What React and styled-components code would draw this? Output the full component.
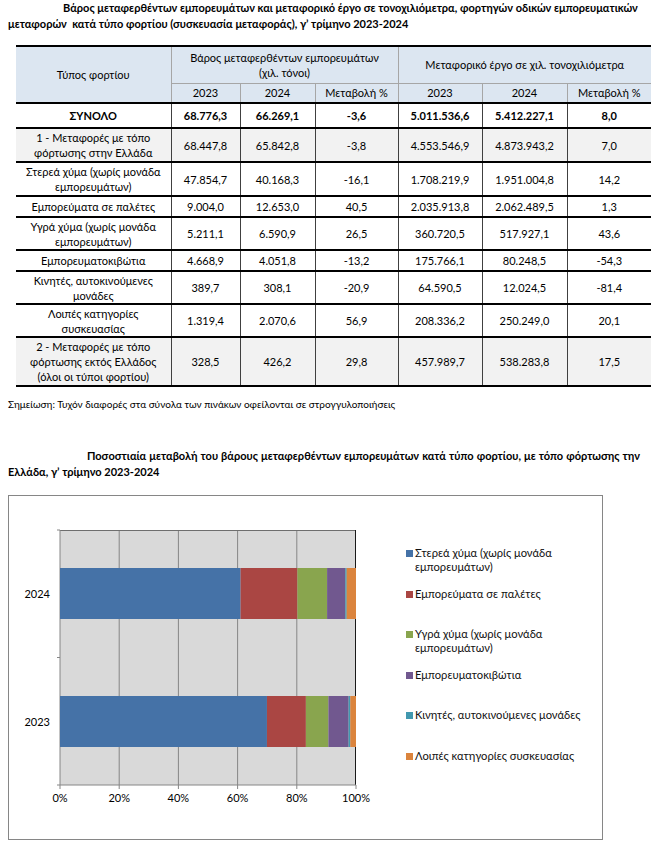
import React from 'react';
import styled, { createGlobalStyle } from 'styled-components';

const GlobalStyle = createGlobalStyle`
  body {
    margin: 0;
    background: #fff;
    color: #000;
    font-family: Lato, "Liberation Sans", sans-serif;
  }
`;

const Page = styled.div`
  width: 654px;
  padding: 0 0 0 8px;
  box-sizing: border-box;
`;

const Title = styled.div`
  width: 632px;
  font-size: 11px;
  font-weight: 700;
  line-height: 16px;
`;

const TitleLine = styled.div`
  padding-left: ${p => p.$indent || 0}px;
  text-align: ${p => (p.$justify ? 'justify' : 'left')};
  text-align-last: ${p => (p.$justify ? 'justify' : 'auto')};
`;

const Table = styled.table`
  margin: 13px 0 0 8px;
  width: 635px;
  table-layout: fixed;
  border-collapse: collapse;
  font-size: 11px;
  line-height: 15px;
`;

const HeadCell = styled.th`
  padding: 0;
  font-weight: 400;
  text-align: center;
  background: #dce6f1;
  border-top: ${p => (p.$top ? '2px solid #000' : '1px solid #a6a6a6')};
  border-left: ${p => (p.$first ? 'none' : '1px solid #a6a6a6')};
`;

const Row = styled.tr`
  height: ${p => p.$h}px;
  background: ${p => (p.$shade ? '#f2f2f2' : '#fff')};
`;

const Cell = styled.td`
  padding: 0;
  text-align: center;
  font-weight: ${p => (p.$bold ? 700 : 400)};
  border-top: 2px solid #000;
  border-bottom: 2px solid #000;
  border-left: ${p => (p.$first ? 'none' : '1px solid #404040')};
`;

const Note = styled.div`
  margin-top: 9px;
  font-size: 10px;
  line-height: 16px;
`;

const ChartTitle = styled(Title)`
  margin-top: 36px;
`;

const ChartBox = styled.div`
  margin-top: 15px;
  width: 595px;
  height: 345px;
  border: 1px solid #868686;
  box-sizing: border-box;
  display: flex;
`;

const Legend = styled.ul`
  list-style: none;
  margin: 50px 0 0 27px;
  padding: 0;
  font-size: 11.2px;
  line-height: 14px;
  color: #111;
`;

const LegendItem = styled.li`
  display: flex;
  gap: 2px;
  height: 40.6px;
`;

const Swatch = styled.span`
  flex: none;
  width: 7px;
  height: 7px;
  margin-top: 4px;
  background: ${p => p.$color};
`;

const columns = [155, 69, 75, 83, 84, 85, 84];

const rows = [
  { name: ['ΣΥΝΟΛΟ'], v: ['68.776,3', '66.269,1', '-3,6', '5.011.536,6', '5.412.227,1', '8,0'], bold: true, h: 25 },
  { name: ['1 - Μεταφορές με τόπο', 'φόρτωσης στην Ελλάδα'], v: ['68.447,8', '65.842,8', '-3,8', '4.553.546,9', '4.873.943,2', '7,0'], shade: true, h: 34 },
  { name: ['Στερεά χύμα (χωρίς μονάδα', 'εμπορευμάτων)'], v: ['47.854,7', '40.168,3', '-16,1', '1.708.219,9', '1.951.004,8', '14,2'], h: 34 },
  { name: ['Εμπορεύματα σε παλέτες'], v: ['9.004,0', '12.653,0', '40,5', '2.035.913,8', '2.062.489,5', '1,3'], h: 21 },
  { name: ['Υγρά χύμα (χωρίς μονάδα', 'εμπορευμάτων)'], v: ['5.211,1', '6.590,9', '26,5', '360.720,5', '517.927,1', '43,6'], h: 33 },
  { name: ['Εμπορευματοκιβώτια'], v: ['4.668,9', '4.051,8', '-13,2', '175.766,1', '80.248,5', '-54,3'], h: 21 },
  { name: ['Κινητές, αυτοκινούμενες', 'μονάδες'], v: ['389,7', '308,1', '-20,9', '64.590,5', '12.024,5', '-81,4'], h: 33 },
  { name: ['Λοιπές κατηγορίες', 'συσκευασίας'], v: ['1.319,4', '2.070,6', '56,9', '208.336,2', '250.249,0', '20,1'], h: 33 },
  { name: ['2 - Μεταφορές με τόπο', 'φόρτωσης εκτός Ελλάδος', '(όλοι οι τύποι φορτίου)'], v: ['328,5', '426,2', '29,8', '457.989,7', '538.283,8', '17,5'], shade: true, h: 49 },
];

const series = [
  { label: ['Στερεά χύμα (χωρίς μονάδα', 'εμπορευμάτων)'], color: '#4572a7', y2023: 47854.7, y2024: 40168.3 },
  { label: ['Εμπορεύματα σε παλέτες'], color: '#aa4643', y2023: 9004.0, y2024: 12653.0 },
  { label: ['Υγρά χύμα (χωρίς μονάδα', 'εμπορευμάτων)'], color: '#89a54e', y2023: 5211.1, y2024: 6590.9 },
  { label: ['Εμπορευματοκιβώτια'], color: '#71588f', y2023: 4668.9, y2024: 4051.8 },
  { label: ['Κινητές, αυτοκινούμενες μονάδες'], color: '#4198af', y2023: 389.7, y2024: 308.1 },
  { label: ['Λοιπές κατηγορίες συσκευασίας'], color: '#db843d', y2023: 1319.4, y2024: 2070.6 },
];

const PLOT = { x: 51, y: 34, w: 296, h: 255 };

const Bar = ({ year, y }) => {
  const key = 'y' + year;
  const total = series.reduce((s, d) => s + d[key], 0);
  let acc = 0;
  return (
    <g>
      {series.map(d => {
        const x = PLOT.x + (acc / total) * PLOT.w;
        acc += d[key];
        const x2 = PLOT.x + (acc / total) * PLOT.w;
        return <rect key={d.color} x={x} y={y} width={x2 - x} height={51} fill={d.color} />;
      })}
      <text x={41} y={y + 30} textAnchor="end" fontSize="11" fill="#000">{year}</text>
    </g>
  );
};

const Chart = () => {
  const ticks = [0, 20, 40, 60, 80, 100];
  return (
    <svg width="370" height="343" style={{ flex: 'none', fontFamily: 'Lato, "Liberation Sans", sans-serif' }}>
      <rect x={PLOT.x} y={PLOT.y} width={PLOT.w} height={PLOT.h} fill="#d9d9d9" />
      {ticks.map(t => {
        const x = PLOT.x + (t / 100) * PLOT.w;
        return (
          <g key={t}>
            {t > 0 && t < 100 && <line x1={x} x2={x} y1={PLOT.y} y2={PLOT.y + PLOT.h} stroke="#868686" />}
            <line x1={x} x2={x} y1={PLOT.y + PLOT.h} y2={PLOT.y + PLOT.h + 4} stroke="#868686" />
            <text x={x} y={PLOT.y + PLOT.h + 17} textAnchor="middle" fontSize="11" fill="#000">{t}%</text>
          </g>
        );
      })}
      <line x1={PLOT.x} x2={PLOT.x + PLOT.w} y1={PLOT.y + 0.5} y2={PLOT.y + 0.5} stroke="#6e6e6e" />
      <line x1={PLOT.x + PLOT.w - 0.5} x2={PLOT.x + PLOT.w - 0.5} y1={PLOT.y} y2={PLOT.y + PLOT.h} stroke="#1a1a1a" />
      <line x1={PLOT.x} x2={PLOT.x} y1={PLOT.y} y2={PLOT.y + PLOT.h} stroke="#868686" />
      <line x1={PLOT.x} x2={PLOT.x + PLOT.w} y1={PLOT.y + PLOT.h} y2={PLOT.y + PLOT.h} stroke="#868686" />
      {[0, 0.5, 1].map(f => (
        <line key={f} x1={PLOT.x - 3} x2={PLOT.x} y1={PLOT.y + f * PLOT.h} y2={PLOT.y + f * PLOT.h} stroke="#868686" />
      ))}
      <Bar year="2024" y={72} />
      <Bar year="2023" y={200} />
    </svg>
  );
};

const App = () => (
  <Page>
    <GlobalStyle />
    <Title>
      <TitleLine $indent={55}>
        Βάρος μεταφερθέντων εμπορευμάτων και μεταφορικό έργο σε τονοχιλιόμετρα, φορτηγών οδικών εμπορευματικών
      </TitleLine>
      <TitleLine>μεταφορών&nbsp; κατά τύπο φορτίου (συσκευασία μεταφοράς), γ’ τρίμηνο 2023-2024</TitleLine>
    </Title>

    <Table>
      <colgroup>
        {columns.map((w, i) => <col key={i} style={{ width: w }} />)}
      </colgroup>
      <thead>
        <tr style={{ height: 37 }}>
          <HeadCell rowSpan={2} $top $first>Τύπος φορτίου</HeadCell>
          <HeadCell colSpan={3} $top>Βάρος μεταφερθέντων εμπορευμάτων<br />(χιλ. τόνοι)</HeadCell>
          <HeadCell colSpan={3} $top>Μεταφορικό έργο σε χιλ. τονοχιλιόμετρα</HeadCell>
        </tr>
        <tr style={{ height: 20 }}>
          {['2023', '2024', 'Μεταβολή %', '2023', '2024', 'Μεταβολή %'].map((t, i) => (
            <HeadCell key={i}>{t}</HeadCell>
          ))}
        </tr>
      </thead>
      <tbody>
        {rows.map((r, i) => (
          <Row key={i} $h={r.h} $shade={r.shade}>
            <Cell $first $bold={r.bold}>
              {r.name.map((l, j) => <div key={j}>{l}</div>)}
            </Cell>
            {r.v.map((v, j) => <Cell key={j} $bold={r.bold}>{v}</Cell>)}
          </Row>
        ))}
      </tbody>
    </Table>

    <Note>Σημείωση: Τυχόν διαφορές στα σύνολα των πινάκων οφείλονται σε στρογγυλοποιήσεις</Note>

    <ChartTitle>
      <TitleLine $indent={79} $justify>
        Ποσοστιαία μεταβολή του βάρους μεταφερθέντων εμπορευμάτων κατά τύπο φορτίου, με τόπο φόρτωσης την
      </TitleLine>
      <TitleLine>Ελλάδα, γ’ τρίμηνο 2023-2024</TitleLine>
    </ChartTitle>

    <ChartBox>
      <Chart />
      <Legend>
        {series.map(s => (
          <LegendItem key={s.color}>
            <Swatch $color={s.color} />
            <span>{s.label.map((l, j) => <div key={j}>{l}</div>)}</span>
          </LegendItem>
        ))}
      </Legend>
    </ChartBox>
  </Page>
);

export default App;
